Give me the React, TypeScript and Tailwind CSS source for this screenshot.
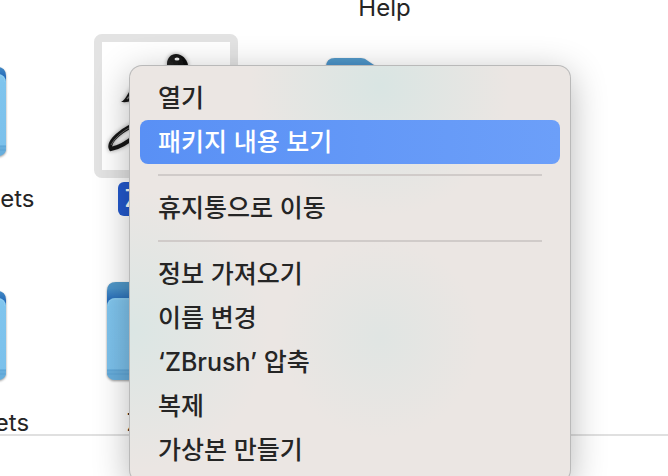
import React from "react";

const Folder: React.FC = () => {
  return (
    <svg
      width="118"
      height="96"
      viewBox="0 0 118 96"
      className="overflow-visible drop-shadow-[0_1px_1px_rgba(0,0,0,0.4)]"
      aria-hidden="true"
    >
      <defs>
        <linearGradient id="folderBack" x1="0" y1="0" x2="0" y2="1">
          <stop offset="0" stopColor="#5399c8" />
          <stop offset="0.08" stopColor="#4a92c8" />
          <stop offset="0.24" stopColor="#2469b8" />
        </linearGradient>
        <linearGradient id="folderFront" x1="0" y1="0" x2="0" y2="1">
          <stop offset="0" stopColor="#83c7ee" />
          <stop offset="0.1" stopColor="#7fc4ed" />
          <stop offset="1" stopColor="#7bc0eb" />
        </linearGradient>
      </defs>
      <path d="M0 12V9Q0 0 9 0H35Q39 0 42 3L48 7Q51 9 55 9H109Q118 9 118 18V80H0Z" fill="url(#folderBack)" />
      <rect y="16" width="118" height="82" rx="8" fill="url(#folderFront)" />
      <path d="M0 88H118V90Q118 98 109 98H9Q0 98 0 90Z" fill="#68aedc" />
      <path d="M0 88H118M0 92H118" stroke="#5aa2d4" strokeWidth="1" />
      <path d="M1 24Q1 17 8 17H110Q117 17 117 24" fill="none" stroke="#8fcef1" />
    </svg>
  );
};

const ZBrushLogo: React.FC = () => {
  return (
    <svg width="128" height="128" viewBox="0 0 128 128" aria-hidden="true">
      <defs>
        <radialGradient id="ink" cx="0.5" cy="0.3" r="0.6">
          <stop offset="0" stopColor="#444" />
          <stop offset="0.3" stopColor="#222" />
          <stop offset="1" stopColor="#050505" />
        </radialGradient>
        <filter id="inkGlow" x="-20%" y="-20%" width="140%" height="140%">
          <feDropShadow dx="0" dy="0" stdDeviation="2" floodColor="#000" floodOpacity="0.4" />
        </filter>
      </defs>
      <g filter="url(#inkGlow)">
        <path d="M65 22C65 16 69 12 74 12C80 12 85 17 86 23C86 34 72 60 52 84L46 78C58 60 66 40 65 22Z" fill="url(#ink)" />
        <ellipse cx="75" cy="17" rx="2.5" ry="1.5" fill="#eee" />
        <path d="M19 60C25 57 25 50 33 43L48 36V57C38 56 27 61 20 60Z" fill="#151515" />
        <path d="M25 57L31 51" stroke="#777" strokeWidth="1.5" />
        <path d="M9 107C5 100 20 86 42 79C48 83 25 104 9 107Z" fill="none" stroke="#181818" strokeWidth="4" />
        <path d="M9 103Q14 93 30 84" fill="none" stroke="#666" strokeWidth="1" />
      </g>
    </svg>
  );
};

type FileItemProps = {
  name: string;
  selected?: boolean;
  children: React.ReactNode;
};

const FileItem: React.FC<FileItemProps> = ({ name, selected, children }) => {
  return (
    <li className="flex flex-col items-center gap-1">
      <div
        className={
          selected
            ? "flex size-36 items-center justify-center rounded-lg border-8 border-[#e3e3e3] bg-white"
            : "flex size-36 items-center justify-center"
        }
      >
        {children}
      </div>
      <span className={selected ? "rounded-md bg-[#2359cd] px-1.5 leading-[34px] font-medium text-white" : "px-1.5 leading-[34px]"}>
        {name}
      </span>
    </li>
  );
};

type MenuItemProps = {
  label: string;
  active?: boolean;
};

const MenuItem: React.FC<MenuItemProps> = ({ label, active }) => {
  return (
    <button
      type="button"
      role="menuitem"
      className={
        active
          ? "block h-11 w-full rounded-lg bg-linear-to-r from-[#5990f5] to-[#6c9ff9] px-[18px] pt-0.5 text-left text-white"
          : "block h-11 w-full rounded-lg px-[18px] pt-0.5 text-left"
      }
    >
      {label}
    </button>
  );
};

const Separator: React.FC = () => <hr className="mx-[18px] my-2.5 h-0.5 border-0 bg-[#d0cbc9]" />;

const App: React.FC = () => {
  return (
    <div className="relative flex h-screen flex-col overflow-hidden bg-white [font-family:'Inter','Noto_Sans_CJK_KR',sans-serif] text-2xl text-[#252525]">
      {/* Finder icons */}
      <main className="min-h-0 flex-1 overflow-hidden">
        <ul className="-ml-[163px] grid grid-cols-[repeat(3,219px)]">
          <li className="col-start-3 h-[34px] text-center leading-4">Help</li>
        </ul>
        <ul className="-ml-[163px] grid grid-cols-[repeat(3,219px)] gap-y-[42px]">
          <FileItem name="ZBrushGadgets">
            <Folder />
          </FileItem>
          <FileItem name="ZBrush" selected>
            <ZBrushLogo />
          </FileItem>
          <FileItem name="ZData">
            <Folder />
          </FileItem>
          <FileItem name="ZBrushPlugets">
            <Folder />
          </FileItem>
          <FileItem name="ZPlugs">
            <Folder />
          </FileItem>
          <FileItem name="ZStartup">
            <Folder />
          </FileItem>
        </ul>
      </main>
      <footer className="h-[42px] shrink-0 border-t-2 border-[#e0e0e0]" />

      {/* Context menu */}
      <div
        role="menu"
        className="absolute top-[66px] left-[130px] w-[440px] rounded-xl bg-[#ebe6e3] bg-[radial-gradient(circle_at_250px_20px,#d9e5e3,transparent_130px),radial-gradient(circle_at_250px_272px,#e0e5e3,transparent_100px),radial-gradient(circle_at_0px_264px,#dbe6e4,transparent_140px)] p-2.5 text-[25px] font-medium shadow-[0_0_0_1px_#b9b9b9,0_8px_36px_rgba(0,0,0,0.3)]"
      >
        <MenuItem label="열기" />
        <MenuItem label="패키지 내용 보기" active />
        <Separator />
        <MenuItem label="휴지통으로 이동" />
        <Separator />
        <MenuItem label="정보 가져오기" />
        <MenuItem label="이름 변경" />
        <MenuItem label="‘ZBrush’ 압축" />
        <MenuItem label="복제" />
        <MenuItem label="가상본 만들기" />
      </div>
    </div>
  );
};

export default App;
